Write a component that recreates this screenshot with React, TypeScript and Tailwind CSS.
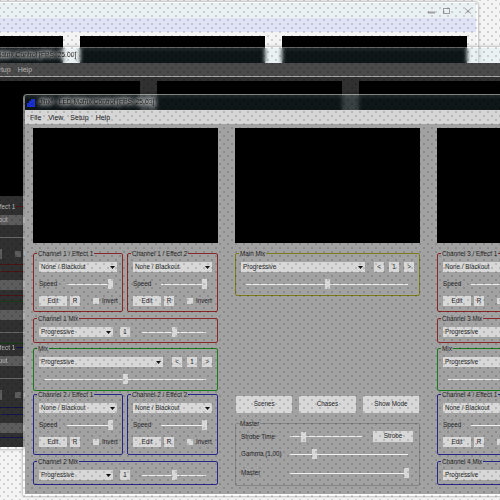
import React, { createContext, useContext } from 'react';

const themes = {
  light: {
    frame: 'border-white/50',
    menu: 'bg-[#dfe3f5] text-[#222]',
    body: 'bg-[#f4f4f4] text-[#222]',
    control: 'bg-[#e4e4e4]',
    line: 'bg-[#ececec]',
    red: 'border-[#b05050]',
    green: 'border-[#50a050]',
    blue: 'border-[#5050b0]',
    olive: 'border-[#a0a060]',
    plain: 'border-[#c0c0c0]',
    buttons: 'text-[#a0a0a0]',
  },
  dark: {
    frame: 'border-white/40',
    menu: 'bg-[#4a4a4a] text-[#b5b5b5] border-b border-[#a8a8a8]',
    body: 'bg-[#303030] text-[#b8b8b8]',
    control: 'bg-[#5c5c5c]',
    line: 'bg-[#666666]',
    red: 'border-[#4a1414]',
    green: 'border-[#143c14]',
    blue: 'border-[#14144a]',
    olive: 'border-[#3c3c14]',
    plain: 'border-[#484848]',
    buttons: 'text-[#8a8a8a]',
  },
  grey: {
    frame: 'border-white/50',
    menu: 'bg-[#d6d6d6] text-[#222]',
    body: 'bg-[#a2a2a2] text-[#262626]',
    control: 'bg-[#d8d8d8]',
    line: 'bg-[#f0f0f0]',
    red: 'border-[#8a2626]',
    green: 'border-[#187a18]',
    blue: 'border-[#26268a]',
    olive: 'border-[#7c7c18]',
    plain: 'border-[#848484]',
    buttons: 'text-[#8a8a8a]',
  },
};

type Theme = typeof themes.grey;
const ThemeContext = createContext<Theme>(themes.grey);

type Tone = 'red' | 'green' | 'blue' | 'olive' | 'plain';

function Group({ label, tone, className, children }: { label: string; tone: Tone; className: string; children: React.ReactNode }) {
  const theme = useContext(ThemeContext);
  return (
    <fieldset className={`border rounded-[2px] min-w-0 px-[5px] ${theme[tone]} ${className}`}>
      <legend className="-ml-[2px] px-[1px] text-[6.3px] leading-[7px]">{label}</legend>
      {children}
    </fieldset>
  );
}

function Combo({ value, className }: { value: string; className: string }) {
  const theme = useContext(ThemeContext);
  return (
    <div className={`h-[10px] flex items-center justify-between pl-[2px] pr-[2px] text-[6.3px] leading-none ${theme.control} ${className}`}>
      <span>{value}</span>
      <svg width="5" height="3" viewBox="0 0 5 3" className="shrink-0">
        <path d="M0 0h5L2.5 3z" fill="#111" />
      </svg>
    </div>
  );
}

function Btn({ label, className }: { label: string; className: string }) {
  const theme = useContext(ThemeContext);
  return (
    <div className={`flex items-center justify-center text-[6.3px] leading-none shrink-0 ${theme.control} ${className}`}>
      {label}
    </div>
  );
}

function Slider({ pos, className }: { pos: number; className: string }) {
  const theme = useContext(ThemeContext);
  return (
    <div className={`relative h-[10px] flex items-center shrink-0 ${className}`}>
      <div className={`w-full h-[1px] ${theme.line}`} />
      <div
        className={`absolute top-0 w-[5px] h-[10px] -ml-[2px] ${theme.control}`}
        style={{ left: `${pos}%` }}
      />
    </div>
  );
}

function EffectGroup({ label, tone, height }: { label: string; tone: Tone; height: string }) {
  const theme = useContext(ThemeContext);
  return (
    <Group label={label} tone={tone} className={height}>
      <Combo value="None / Blackout" className="mt-[5px] w-full" />
      <div className="flex items-center mt-[7px] h-[10px] text-[6.3px]">
        <span className="w-[28px] shrink-0">Speed</span>
        <Slider pos={96} className="w-[45px]" />
      </div>
      <div className="flex items-center mt-[7px] h-[10px] text-[6.3px]">
        <Btn label="Edit" className="w-[28px] h-[10px]" />
        <Btn label="R" className="w-[10px] h-[10px] ml-[3px]" />
        <div className={`w-[6px] h-[6px] ml-[13px] shrink-0 ${theme.control}`} />
        <span className="ml-[3px]">Invert</span>
      </div>
    </Group>
  );
}

function ChannelMix({ label, tone, height }: { label: string; tone: Tone; height: string }) {
  return (
    <Group label={label} tone={tone} className={height}>
      <div className="flex items-center mt-[5px]">
        <Combo value="Progressive" className="w-[74px] shrink-0" />
        <Btn label="1" className="w-[10px] h-[10px] ml-[7px]" />
        <Slider pos={50} className="w-[64px] ml-[12px]" />
      </div>
    </Group>
  );
}

function MixGroup({ label, tone, pos }: { label: string; tone: Tone; pos: number }) {
  return (
    <Group label={label} tone={tone} className="h-[46px]">
      <div className="flex items-center mt-[5px]">
        <Combo value="Progressive" className="w-[124px] shrink-0" />
        <Btn label="<" className="w-[10px] h-[10px] ml-[9px]" />
        <Btn label="1" className="w-[10px] h-[10px] ml-[5px]" />
        <Btn label=">" className="w-[10px] h-[10px] ml-[5px]" />
      </div>
      <Slider pos={pos} className="w-[162px] ml-[5px] mt-[7px]" />
    </Group>
  );
}

function Preview() {
  return <div className="h-[115px] bg-black" />;
}

function ChannelControls({ top, bottom }: { top: number; bottom: number }) {
  return (
    <>
      <div className="grid grid-cols-[90px_91px] gap-x-[4px] mt-[7px]">
        <EffectGroup label={`Channel ${top} / Effect 1`} tone="red" height="h-[62px]" />
        <EffectGroup label={`Channel ${top} / Effect 2`} tone="red" height="h-[62px]" />
      </div>
      <div className="mt-[3px]">
        <ChannelMix label={`Channel ${top} Mix`} tone="red" height="h-[28px]" />
      </div>
      <div className="mt-[2px]">
        <MixGroup label="Mix" tone="green" pos={50} />
      </div>
      <div className="grid grid-cols-[90px_91px] gap-x-[4px]">
        <EffectGroup label={`Channel ${bottom} / Effect 1`} tone="blue" height="h-[64px]" />
        <EffectGroup label={`Channel ${bottom} / Effect 2`} tone="blue" height="h-[64px]" />
      </div>
      <div className="mt-[3px]">
        <ChannelMix label={`Channel ${bottom} Mix`} tone="blue" height="h-[27px]" />
      </div>
    </>
  );
}

function MainControls() {
  return (
    <>
      <div className="mt-[7px]">
        <MixGroup label="Main Mix" tone="olive" pos={50} />
      </div>
      <div className="grid grid-cols-3 gap-x-[7px] mt-[100px] px-[1px]">
        <Btn label="Scenes" className="h-[17px]" />
        <Btn label="Chases" className="h-[17px]" />
        <Btn label="Show Mode" className="h-[17px]" />
      </div>
      <Group label="Master" tone="plain" className="h-[66px] mt-[7px]">
        <div className="flex items-center mt-[4px] h-[11px] text-[6.3px]">
          <span className="w-[49px] shrink-0">Strobe Time</span>
          <Slider pos={18} className="w-[72px]" />
          <Btn label="Strobe" className="w-[40px] h-[11px] ml-[11px]" />
        </div>
        <div className="flex items-center mt-[7px] h-[10px] text-[6.3px]">
          <span className="w-[49px] shrink-0">Gamma (1.00)</span>
          <Slider pos={20} className="w-[118px]" />
        </div>
        <div className="flex items-center mt-[9px] h-[10px] text-[6.3px]">
          <span className="w-[49px] shrink-0">Master</span>
          <Slider pos={98} className="w-[118px]" />
        </div>
      </Group>
    </>
  );
}

// detail: how many columns get their controls drawn, the rest sit behind the next window
function Window({ theme, fps, detail, className }: { theme: Theme; fps?: string; detail: number; className: string }) {
  return (
    <ThemeContext.Provider value={theme}>
      <div
        className={`absolute w-[610px] h-[402px] flex flex-col border-x-2 border-b-2 border-t rounded-t-[4px] font-['Liberation_Sans',sans-serif] shadow-[0_0_3px_rgba(0,0,0,0.45)] ${theme.frame} ${className}`}
      >
        <div className="h-[15px] shrink-0 flex items-center backdrop-blur-[2px] bg-[#8fd8e8]/10 text-[#1c1c1c]">
          {fps && (
            <>
              <svg width="8" height="8" viewBox="0 0 8 8" className="ml-[2px] shrink-0">
                <path d="M0 8V4h2V2h2V0h4v8z" fill="#1a2fd0" />
              </svg>
              <span className="ml-[4px] text-[6.7px] leading-none [text-shadow:0_0_6px_#fff,0_0_6px_#fff,0_0_5px_#fff,0_0_3px_#aaa]">
                Jinx! - LED Matrix Control [FPS: {fps}]
              </span>
            </>
          )}
          <div className={`ml-auto mr-[2px] flex items-center ${theme.buttons}`}>
            <svg width="46" height="8" viewBox="0 0 46 8" fill="none" stroke="currentColor">
              <path d="M0 5.5h7" strokeWidth="2" />
              <rect x="15.5" y="1.5" width="6" height="5" />
              <path d="M37 1.5l6 5M43 1.5l-6 5" />
            </svg>
          </div>
        </div>
        <div className={`h-[14px] shrink-0 flex items-center gap-[7px] pl-[5px] text-[7px] leading-none ${theme.menu}`}>
          {fps && (
            <>
              <span>File</span>
              <span>View</span>
              <span>Setup</span>
              <span>Help</span>
            </>
          )}
        </div>
        <div className={`flex-1 pt-[4px] px-[8px] grid grid-cols-[185px_185px_185px] gap-x-[17px] content-start ${theme.body}`}>
          <div className="flex flex-col">
            <Preview />
            {detail > 0 && <ChannelControls top={1} bottom={2} />}
          </div>
          <div className="flex flex-col">
            <Preview />
            {detail > 1 && <MainControls />}
          </div>
          <div className="flex flex-col">
            <Preview />
            {detail > 1 && <ChannelControls top={3} bottom={4} />}
          </div>
        </div>
      </div>
    </ThemeContext.Provider>
  );
}

export default function App() {
  return (
    <div className="relative w-[500px] h-[500px] overflow-hidden bg-[#f4f4f4]">
      <div className="w-full h-full blur-[0.4px]">
        <Window theme={themes.light} detail={0} className="left-[-132px] top-[2px]" />
        <Window theme={themes.dark} fps="25.00" detail={1} className="left-[-55px] top-[47px]" />
        <Window theme={themes.grey} fps="25.03" detail={2} className="left-[23px] top-[94px]" />
      </div>
      {/* dither left over from the screenshot's scaling */}
      <div className="absolute inset-0 pointer-events-none bg-[image:radial-gradient(circle,rgba(0,0,0,0.3)_0.5px,transparent_0.9px),radial-gradient(circle,rgba(0,0,0,0.3)_0.5px,transparent_0.9px)] [background-size:8px_8px] [background-position:0_0,4px_4px]" />
    </div>
  );
}
